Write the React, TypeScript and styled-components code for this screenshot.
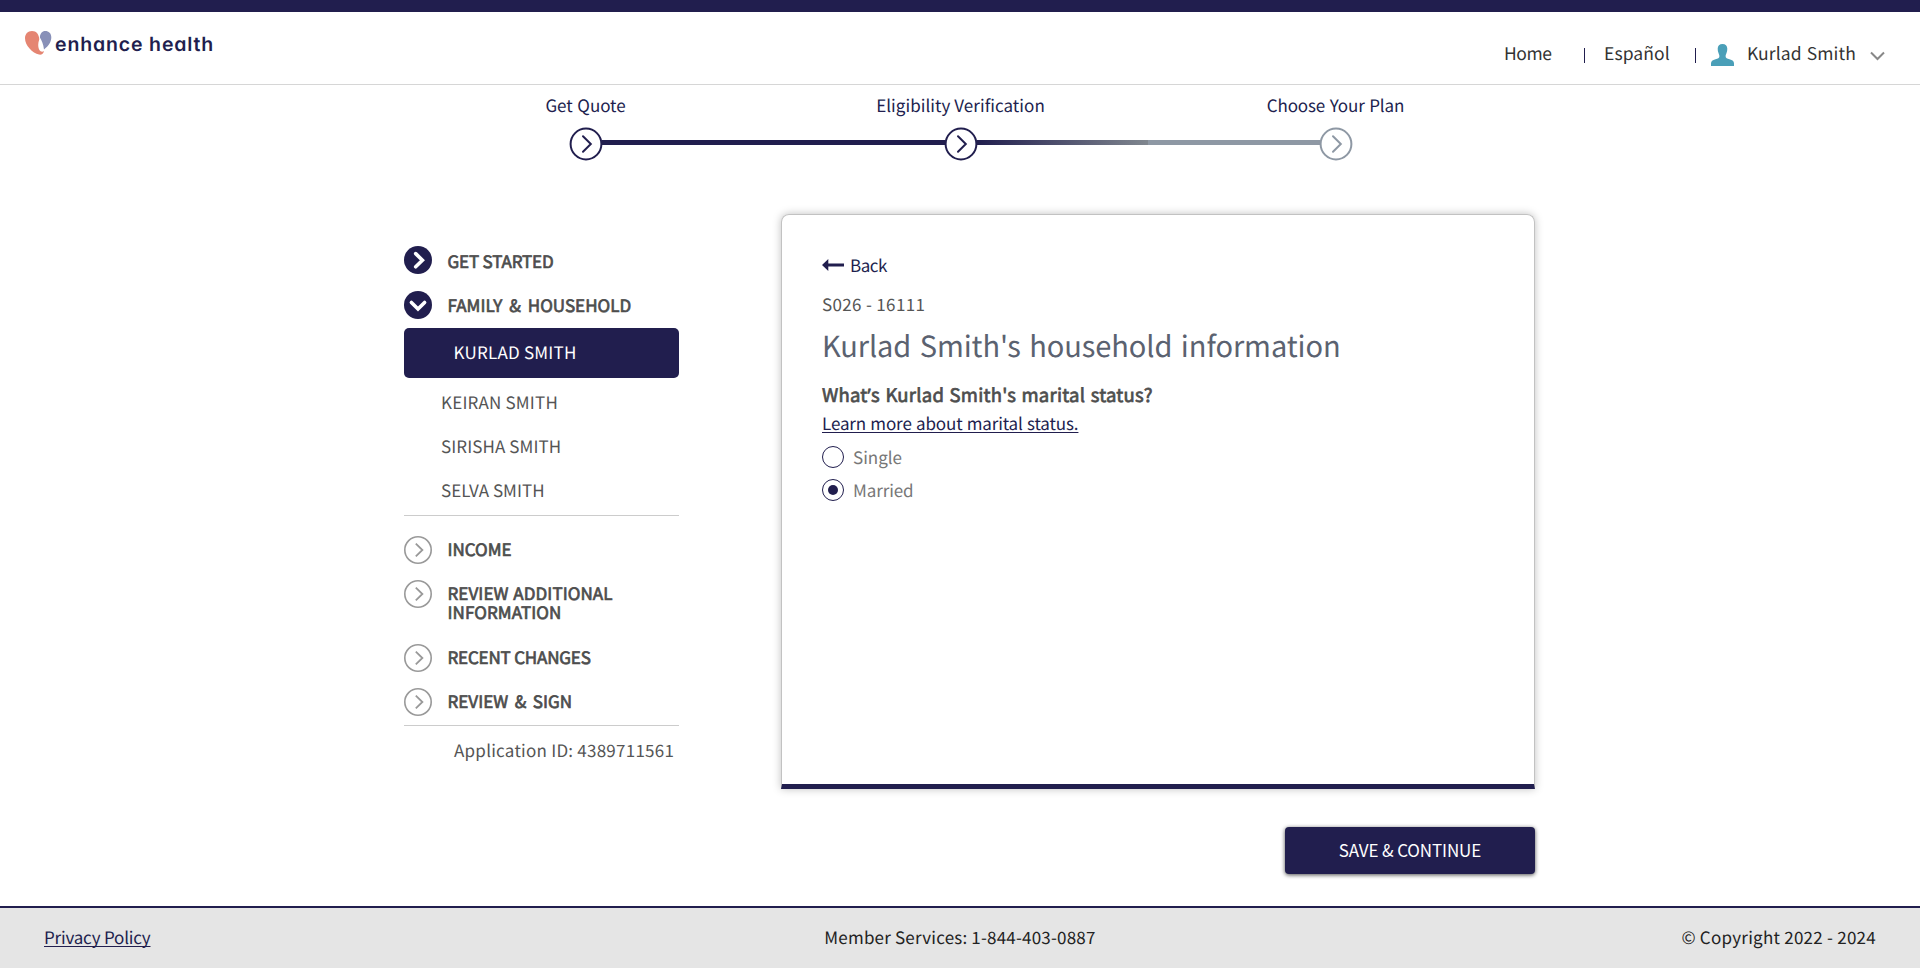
import React from 'react';
import styled, { createGlobalStyle, css } from 'styled-components';

const NAVY = '#211e4e';

const GlobalStyle = createGlobalStyle`
  * { box-sizing: border-box; }
  body {
    margin: 0;
    background: #fff;
    color: #333;
    font-family: "Noto Sans CJK SC", "Noto Sans", sans-serif;
    font-size: 17px;
    line-height: 24px;
    text-rendering: geometricPrecision;
  }
`;

/* Single run of text; $ls and $ws are its letter and word spacing in px */
const T = styled.span<{ $ls?: number; $ws?: number }>`
  white-space: nowrap;
  letter-spacing: ${p => p.$ls ?? 0}px;
  word-spacing: ${p => p.$ws ?? 0}px;
`;

const Page = styled.div`
  display: flex;
  flex-direction: column;
  height: 968px;
  overflow: hidden;
`;

const TopBar = styled.div`
  flex: none;
  height: 12px;
  background: ${NAVY};
`;

const Header = styled.header`
  flex: none;
  display: flex;
  justify-content: space-between;
  height: 73px;
  padding: 0 35px 0 25px;
  border-bottom: 1px solid #d6d6d6;
`;

const Logo = styled.div`
  display: flex;
  gap: 3px;
  padding-top: 19px;
`;

const LogoText = styled.span`
  margin-top: 1px;
  font-family: Inter, sans-serif;
  font-feature-settings: "cv11";
  font-size: 19.5px;
  font-weight: 600;
  letter-spacing: 0.85px;
  color: ${NAVY};
  white-space: nowrap;
`;

const Nav = styled.nav`
  display: flex;
  margin-top: 30px;
  height: 24px;
  font-size: 17.5px;
`;

const NavCell = styled.div<{ $w: number }>`
  width: ${p => p.$w}px;
`;

const Divider = styled(NavCell)`
  &::before {
    content: "";
    display: block;
    width: 1px;
    height: 15px;
    margin-top: 6px;
    background: ${NAVY};
  }
`;

const UserIcon = styled.svg`
  margin: 2px 13px 0 0;
`;

const Chevron = styled.svg`
  margin-top: 9px;
`;

const Progress = styled.section`
  flex: none;
  display: flex;
  flex-direction: column;
  align-items: center;
  height: 129px;
  padding: 8px 0 0 2px;
  color: ${NAVY};
`;

const StepLabels = styled.div`
  display: grid;
  grid-template-columns: repeat(3, 375px);
  margin-left: -1px;
  text-align: center;
`;

const Track = styled.div`
  display: flex;
  align-items: flex-start;
  width: 784px;
  margin-top: 10px;
`;

const Connector = styled.div<{ $partial?: boolean }>`
  flex: 1;
  height: 5px;
  margin: 13px -1px 0;
  background: ${p =>
    p.$partial
      ? `linear-gradient(to right, ${NAVY} 0%, #80878f 50%, #8e98a4 50%)`
      : NAVY};
`;

const Main = styled.main`
  flex: none;
  display: flex;
  justify-content: space-between;
  width: 1131px;
  margin-left: 404px;
`;

const Sidebar = styled.aside`
  width: 275px;
  padding-top: 31.5px;
  color: #555;
`;

const fauxBold = css`
  -webkit-text-stroke: 0.7px currentColor;
`;

const Section = styled.div<{ $h: number; $drop: number }>`
  display: flex;
  gap: 15.5px;
  height: ${p => p.$h}px;
  line-height: 19px;
  color: #4d4d4d;
  ${fauxBold}
  span { margin-top: ${p => p.$drop}px; }
  svg { flex: none; }
`;

const ActiveMember = styled.div`
  height: 50px;
  margin: 9.5px 0 1.6px;
  padding: 0 0 0 49.5px;
  border-radius: 5px;
  line-height: 47px;
  background: ${NAVY};
  color: #fff;
`;

const Member = styled.div`
  padding-left: 37px;
  line-height: 44px;
`;

const Rule = styled.div<{ $top: number; $bottom: number }>`
  height: 1px;
  margin: ${p => p.$top}px 0 ${p => p.$bottom}px;
  background: #ccc;
`;

const ApplicationId = styled.div`
  padding-left: 50px;
`;

const Content = styled.div`
  display: flex;
  flex-direction: column;
  width: 754px;
`;

const Card = styled.section`
  height: 575px;
  padding: 38px 40px 0;
  border: 1px solid #c2c2c2;
  border-bottom: 5px solid ${NAVY};
  border-radius: 8px 8px 0 0;
  box-shadow: 0 0 8px rgba(0, 0, 0, 0.25);
  color: #555;
`;

const Back = styled.a`
  display: flex;
  align-items: center;
  gap: 6px;
  color: ${NAVY};
`;

const Code = styled.div`
  margin-top: 15px;
`;

const Title = styled.h1`
  margin: 9px 0 0;
  font-size: 29px;
  font-weight: 400;
  line-height: 40px;
  color: #5b6270;
`;

const Question = styled.div`
  margin-top: 18px;
  font-size: 18.5px;
  color: #4d4d4d;
  ${fauxBold}
`;

const Apostrophe = styled.span`
  font-family: "Noto Sans", sans-serif;
`;

const Link = styled.a`
  color: ${NAVY};
  text-decoration: underline;
  text-decoration-thickness: 1px;
  text-underline-offset: 2px;
  text-decoration-skip-ink: none;
`;

const Learn = styled.div`
  margin: 3px 0 10px;
`;

const Option = styled.label`
  display: flex;
  align-items: center;
  gap: 9px;
  margin-bottom: 8.5px;
  color: #777;
`;

const Radio = styled.i<{ $on?: boolean }>`
  display: grid;
  place-items: center;
  width: 22px;
  height: 22px;
  border: 1px solid ${NAVY};
  border-radius: 50%;
  &::after {
    content: "";
    width: 10px;
    height: 10px;
    border-radius: 50%;
    background: ${p => (p.$on ? NAVY : 'transparent')};
  }
`;

const SaveButton = styled.button`
  align-self: flex-end;
  width: 250px;
  height: 47px;
  margin-top: 38px;
  padding: 0 0 2px;
  border: 0;
  border-radius: 4px;
  background: ${NAVY};
  box-shadow: 0 1px 4px rgba(0, 0, 0, 0.7);
  color: #fff;
  font: inherit;
`;

const Footer = styled.footer`
  flex: none;
  display: grid;
  grid-template-columns: 1fr auto 1fr;
  align-items: center;
  height: 62px;
  margin-top: auto;
  padding: 0 44px 3px;
  border-top: 2px solid ${NAVY};
  background: #e5e5e5;
  color: #222;
  > :last-child { justify-self: end; }
`;

const StepIcon = ({ color }: { color: string }) => (
  <svg width="34" height="34" viewBox="0 0 34 34" fill="none" stroke={color} strokeWidth="2">
    <circle cx="17" cy="17" r="15.4" fill="#fff" />
    <path d="M14 9.3 21.8 17 14 24.7" strokeLinecap="round" />
  </svg>
);

const SectionIcon = ({ state }: { state: 'done' | 'open' | 'todo' }) => {
  const todo = state === 'todo';
  return (
    <svg width="28" height="28" viewBox="0 0 28 28" fill="none">
      <circle cx="14" cy="14" r={todo ? 13.2 : 14} fill={todo ? 'none' : NAVY} stroke={todo ? '#999' : 'none'} strokeWidth="1.6" />
      <path
        d={state === 'open' ? 'M7.4 11.4 14 18l6.6-6.6' : todo ? 'M11.8 7.6 18.4 14l-6.6 6.4' : 'M11.7 7.6 18.4 14.2l-6.7 6.6'}
        stroke={todo ? '#999' : '#fff'}
        strokeWidth={todo ? 1.8 : 3.6}
        strokeLinecap={todo ? 'butt' : 'round'}
      />
    </svg>
  );
};

export default function App() {
  return (
    <>
      <GlobalStyle />
      <Page>
        <TopBar />
        <Header>
          <Logo>
            <svg width="27" height="24" viewBox="0 0 27 24">
              <path d="M7 0C2.6 0 0 3.2 0 7.2 0 14.5 7.5 22 14 23.6c2.4.5 4.6-.9 5-3.6-1 .8-2.4.9-3.4.2-2.500-2-3.200-6.800-1.300-12C14 3.500 11.500 0 7 0z" fill="#e58572" />
              <path d="M20.200 0c3.600 0 6.100 2.300 6.100 6.300 0 4.500-2.600 8.700-7.300 12.200C18.500 13 16.500 8.800 14.900 6.400 15.100 2.500 17.200 0 20.200 0z" fill="#8890b8" />
            </svg>
            <LogoText>enhance health</LogoText>
          </Logo>
          <Nav>
            <NavCell $w={80}><T $ls={-0.4}>Home</T></NavCell>
            <Divider $w={20} />
            <NavCell $w={91}><T $ls={0.1}>Español</T></NavCell>
            <Divider $w={16} />
            <UserIcon width="23" height="22" viewBox="0 0 23 22" fill="#4a9fb8">
              <path d="M11.500 0c3 0 4.800 1.700 4.800 4.700 0 1.500-.2 2.900-.8 4.200-.5 1.300-.9 2-.9 3.300 0 1.800 1.600 2.400 3.900 3.100 3 .9 4.500 1.900 4.500 4.200V22H0v-2.500c0-2.300 1.500-3.300 4.500-4.200 2.300-.7 3.900-1.300 3.900-3.100 0-1.300-.4-2-.9-3.300-.6-1.300-.8-2.700-.8-4.200C6.700 1.700 8.500 0 11.500 0z" />
            </UserIcon>
            <NavCell $w={123}><T $ls={0.1} $ws={1}>Kurlad Smith</T></NavCell>
            <Chevron width="15" height="10" viewBox="0 0 15 10" fill="none" stroke="#888" strokeWidth="2">
              <path d="M1 1.500 7.500 8 14 1.500" />
            </Chevron>
          </Nav>
        </Header>

        <Progress>
          <StepLabels>
            <T $ls={-0.05} $ws={1}>Get Quote</T>
            <T $ls={0.05}>Eligibility Verification</T>
            <T $ls={-0.15} $ws={1}>Choose Your Plan</T>
          </StepLabels>
          <Track>
            <StepIcon color={NAVY} />
            <Connector />
            <StepIcon color={NAVY} />
            <Connector $partial />
            <StepIcon color="#8e98a4" />
          </Track>
        </Progress>

        <Main>
          <Sidebar>
            <Section $h={45} $drop={5.5}><SectionIcon state="done" /><T $ls={-0.15}>GET STARTED</T></Section>
            <Section $h={28} $drop={4.5}><SectionIcon state="open" /><T $ls={0.05} $ws={3}>FAMILY &amp; HOUSEHOLD</T></Section>
            <ActiveMember><T $ls={0.22}>KURLAD SMITH</T></ActiveMember>
            <Member><T $ls={0.2}>KEIRAN SMITH</T></Member>
            <Member><T $ls={0.1}>SIRISHA SMITH</T></Member>
            <Member><T $ls={0.05}>SELVA SMITH</T></Member>
            <Rule $top={3.4} $bottom={20} />
            <Section $h={44} $drop={3}><SectionIcon state="todo" /><T>INCOME</T></Section>
            <Section $h={64} $drop={3}><SectionIcon state="todo" /><T $ls={0.08} $ws={1}>REVIEW ADDITIONAL<br />INFORMATION</T></Section>
            <Section $h={44} $drop={3}><SectionIcon state="todo" /><T $ls={-0.18}>RECENT CHANGES</T></Section>
            <Section $h={28} $drop={3}><SectionIcon state="todo" /><T $ls={0.02} $ws={2.7}>REVIEW &amp; SIGN</T></Section>
            <Rule $top={9} $bottom={12} />
            <ApplicationId><T $ls={0.24}>Application ID: 4389711561</T></ApplicationId>
          </Sidebar>

          <Content>
            <Card>
              <Back>
                <svg width="22" height="12" viewBox="0 0 22 12" fill={NAVY}>
                  <path d="M0 6 6.300 0v4.600H22v2.900H6.300V12z" />
                </svg>
                <T $ls={-0.5}>Back</T>
              </Back>
              <Code><T $ls={0.34}>S026 - 16111</T></Code>
              <Title><T $ls={-0.07} $ws={2}>Kurlad Smith's household information</T></Title>
              <Question><T $ls={0.25} $ws={1}>What<Apostrophe>’</Apostrophe>s Kurlad Smith's marital status?</T></Question>
              <Learn><Link><T $ls={-0.13} $ws={0.6}>Learn more about marital status.</T></Link></Learn>
              <Option><Radio /><T>Single</T></Option>
              <Option><Radio $on /><T $ls={-0.1}>Married</T></Option>
            </Card>
            <SaveButton><T $ls={-0.12}>SAVE &amp; CONTINUE</T></SaveButton>
          </Content>
        </Main>

        <Footer>
          <div><Link><T $ls={-0.2}>Privacy Policy</T></Link></div>
          <T $ls={0.2}>Member Services: 1-844-403-0887</T>
          <T $ls={0.25}>© Copyright 2022 - 2024</T>
        </Footer>
      </Page>
    </>
  );
}
